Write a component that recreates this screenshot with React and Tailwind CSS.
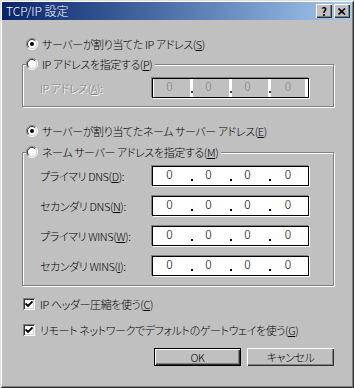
import React from 'react'

const font = "font-['Noto_Sans_CJK_JP','Noto_Sans',sans-serif] [font-feature-settings:'palt']"

function Radio({ checked }) {
    return (
        <svg width="12" height="12" viewBox="0 0 12 12" className="shrink-0">
            <circle cx="6" cy="6" r="5" fill="#fff" />
            <path d="M2.1 9.9 A5.5 5.5 0 0 1 9.9 2.1" fill="none" stroke="#808080" />
            <path d="M9.9 2.1 A5.5 5.5 0 0 1 2.1 9.9" fill="none" stroke="#fff" />
            <path d="M2.8 9.2 A4.5 4.5 0 0 1 9.2 2.8" fill="none" stroke="#303030" />
            <path d="M9.2 2.8 A4.5 4.5 0 0 1 2.8 9.2" fill="none" stroke="#d4d0c8" />
            {checked && <circle cx="6" cy="6" r="2" fill="#000" />}
        </svg>
    )
}

function Check() {
    return (
        <div className="w-[12px] h-[12px] shrink-0 bg-white shadow-[inset_1px_1px_0_#808080,inset_-1px_-1px_0_#fff,inset_2px_2px_0_#303030,inset_-2px_-2px_0_#d4d0c8] flex items-center justify-center">
            <svg width="8" height="8" viewBox="0 0 8 8">
                <path d="M0.5 3.5 L3 6 L7.5 1.5" fill="none" stroke="#000" strokeWidth="1.8" />
            </svg>
        </div>
    )
}

function IpBox({ disabled }) {
    const seg = disabled ? 'bg-[#c0c0c0] text-[#808080]' : 'bg-white text-black'
    const Dot = () => (
        <div className="w-[3px] flex items-end justify-center pb-[4px] bg-white">
            <div className={'w-[2px] h-[2px] ' + (disabled ? 'bg-[#404040]' : 'bg-black')} />
        </div>
    )
    return (
        <div className="flex w-[157px] h-[20px] border border-black bg-white pl-[1px] text-[12px] tracking-normal shadow-[-1px_-1px_0_#808080,1px_1px_0_#fff]">
            <div className={'w-[36px] pr-[5px] text-center leading-[14px] ' + seg}>0</div>
            <Dot />
            <div className={'w-[36px] pr-[5px] text-center leading-[14px] ' + seg}>0</div>
            <Dot />
            <div className={'w-[36px] pr-[5px] text-center leading-[14px] ' + seg}>0</div>
            <Dot />
            <div className={'w-[34px] text-center leading-[14px] ' + seg}>0</div>
        </div>
    )
}

function Row({ label, k }) {
    return (
        <div className="flex items-center h-[20px]">
            <span className="w-[112px] leading-[16px] whitespace-nowrap">
                {label}(<u className="underline-offset-[1px]">{k}</u>):
            </span>
            <IpBox />
        </div>
    )
}

const etched = 'border border-[#808080] shadow-[inset_1px_1px_0_#fff,1px_1px_0_#fff]'
const bevel = 'shadow-[inset_1px_1px_0_#fff,inset_-1px_-1px_0_#303030,inset_-2px_-2px_0_#808080]'

export default function App() {
    return (
        <div className={'w-[354px] h-[388px] bg-[#c0c0c0] p-[2px] text-[11px] tracking-[-0.4px] font-light text-black flex flex-col shadow-[inset_1px_1px_0_#dfdfdf,inset_-1px_-1px_0_#303030,inset_2px_2px_0_#fff,inset_-2px_-2px_0_#808080] ' + font}>
            <div className="h-[18px] flex items-center justify-between pl-[4px] pr-[2px] bg-gradient-to-r from-[#0a246a] to-[#a6caf0]">
                <span className="text-white text-[12px] tracking-normal leading-[16px]">TCP/IP 設定</span>
                <div className="flex">
                    <div className={'w-[16px] h-[14px] bg-[#c0c0c0] flex items-center justify-center font-bold text-[11px] leading-[12px] ' + bevel}>?</div>
                    <div className={'w-[16px] h-[14px] ml-[2px] bg-[#c0c0c0] flex items-center justify-center ' + bevel}>
                        <svg width="8" height="7" viewBox="0 0 8 7">
                            <path d="M0.5 0.5 L7 6.5 M7 0.5 L0.5 6.5" stroke="#000" strokeWidth="1.6" />
                        </svg>
                    </div>
                </div>
            </div>

            <div className="flex flex-col pl-[20px] w-[332px]">
                <div className="flex items-center gap-[4px] h-[16px] mt-[16px] pl-[4px] leading-[16px]">
                    <Radio checked />
                    <span className="whitespace-nowrap">サーバーが割り当てた IP アドレス(<u className="underline-offset-[1px]">S</u>)</span>
                </div>

                <fieldset className={'mt-[4px] w-[312px] px-[3px] pb-[8px] ' + etched}>
                    <legend className="flex items-center gap-[4px] h-[16px] leading-[16px] pr-[3px] bg-[#c0c0c0]">
                        <Radio />
                        <span className="whitespace-nowrap">IP アドレスを指定する(<u className="underline-offset-[1px]">P</u>)</span>
                    </legend>
                    <div className="flex items-center h-[20px] mt-[6px] pl-[14px]">
                        <span className="w-[112px] leading-[16px] text-[#808080] [text-shadow:1px_1px_0_#fff]">
                            IP アドレス(<u className="underline-offset-[1px]">A</u>):
                        </span>
                        <IpBox disabled />
                    </div>
                </fieldset>

                <div className="flex items-center gap-[4px] h-[16px] mt-[16px] pl-[4px] leading-[16px]">
                    <Radio checked />
                    <span className="whitespace-nowrap">サーバーが割り当てたネーム サーバー アドレス(<u className="underline-offset-[1px]">E</u>)</span>
                </div>

                <fieldset className={'mt-[5px] w-[312px] px-[3px] pb-[9px] ' + etched}>
                    <legend className="flex items-center gap-[4px] h-[16px] leading-[16px] pr-[3px] bg-[#c0c0c0]">
                        <Radio />
                        <span className="whitespace-nowrap">ネーム サーバー アドレスを指定する(<u className="underline-offset-[1px]">M</u>)</span>
                    </legend>
                    <div className="flex flex-col gap-[10px] mt-[6px] pl-[14px]">
                        <Row label="プライマリ DNS" k="D" />
                        <Row label="セカンダリ DNS" k="N" />
                        <Row label="プライマリ WINS" k="W" />
                        <Row label="セカンダリ WINS" k="I" />
                    </div>
                </fieldset>

                <div className="flex items-center gap-[5px] h-[16px] mt-[10px] pl-[1px] leading-[16px]">
                    <Check />
                    <span className="whitespace-nowrap">IP ヘッダー圧縮を使う(<u className="underline-offset-[1px]">C</u>)</span>
                </div>
                <div className="flex items-center gap-[5px] h-[16px] mt-[10px] pl-[1px] leading-[16px]">
                    <Check />
                    <span className="whitespace-nowrap">リモート ネットワークでデフォルトのゲートウェイを使う(<u className="underline-offset-[1px]">G</u>)</span>
                </div>

                <div className="flex justify-end gap-[6px] mt-[10px] w-[312px]">
                    <button className={'w-[87px] h-[18px] border border-black bg-[#c0c0c0] leading-[14px] ' + bevel}>OK</button>
                    <button className={'w-[87px] h-[18px] bg-[#c0c0c0] leading-[16px] ' + bevel}>キャンセル</button>
                </div>
            </div>
        </div>
    )
}
